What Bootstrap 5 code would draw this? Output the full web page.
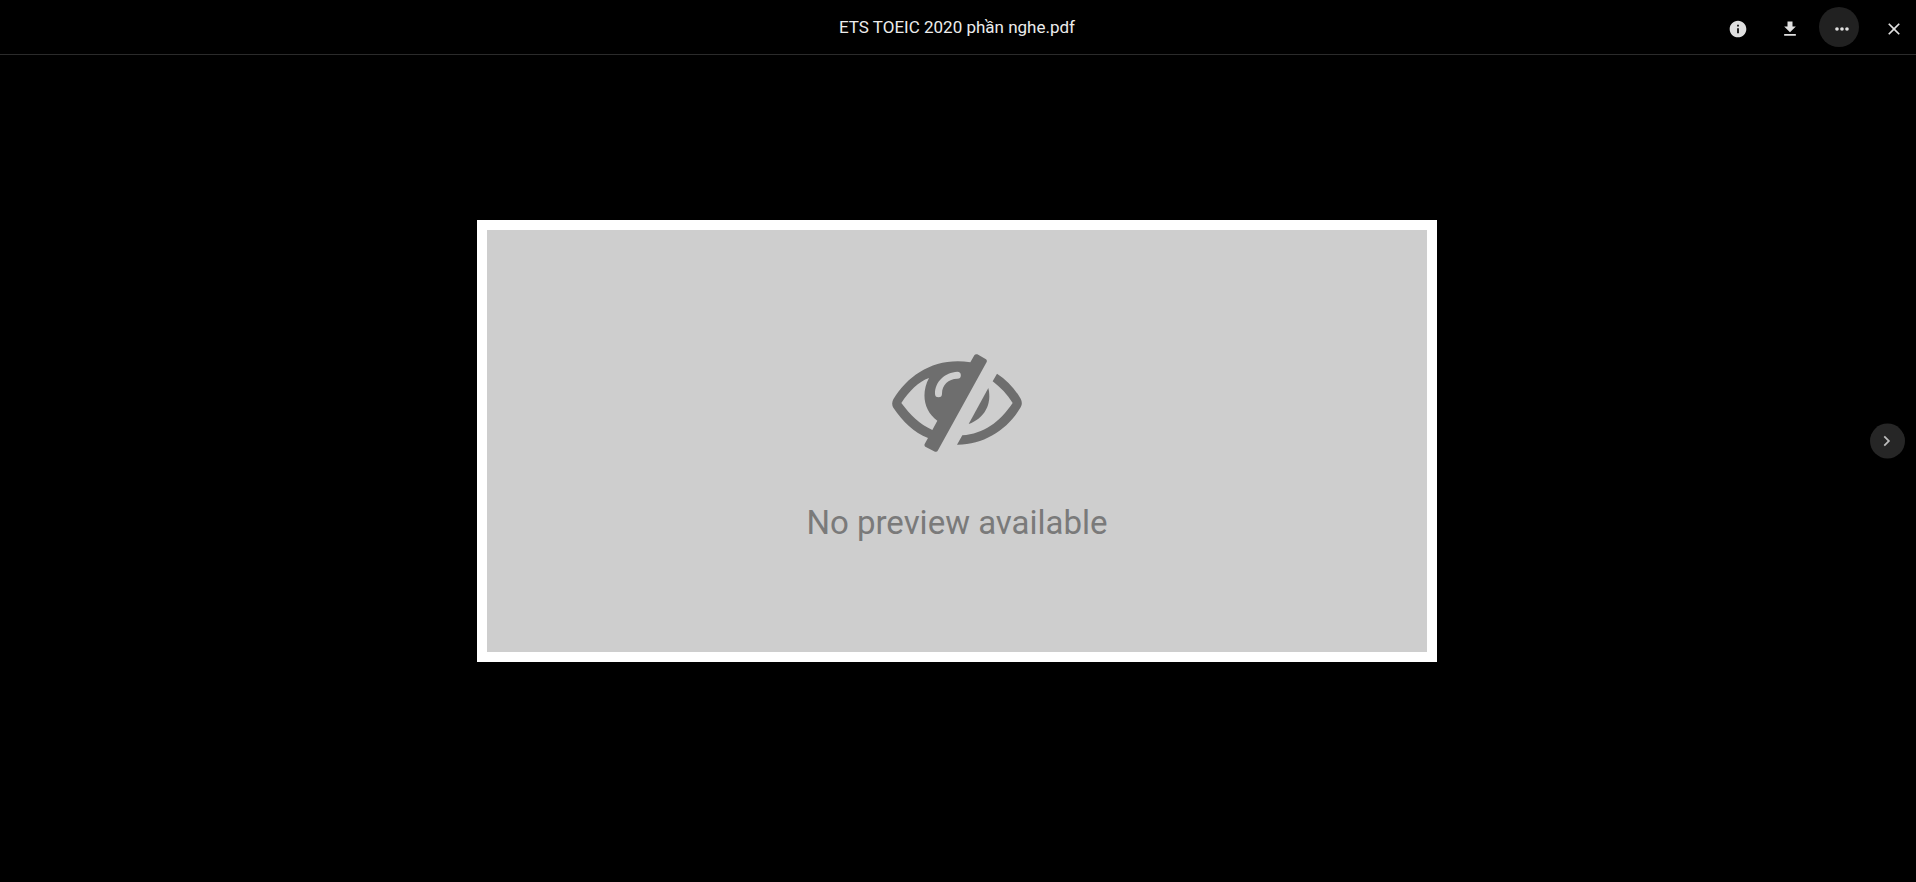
<!DOCTYPE html>
<html lang="en">
<head>
<meta charset="utf-8">
<meta name="viewport" content="width=device-width, initial-scale=1">
<title>ETS TOEIC 2020 phần nghe.pdf</title>
<link href="https://cdn.jsdelivr.net/npm/bootstrap@5.3.0/dist/css/bootstrap.min.css" rel="stylesheet">
<style>
  body { background: #000; font-family: Roboto, "Noto Sans", sans-serif; }
  .viewer { padding-right: 2px; }
  .topbar { height: 55px; border-bottom: 1px solid #2b2b2b; margin-right: -2px; padding-right: 2px; }
  .side { flex: 1 1 0; }
  .file-title { font-size: 17px; line-height: 24px; color: #ececec; }
  .tools { gap: 12px; }
  .tool { width: 40px; height: 40px; color: #e0e0e0; border: 0; border-radius: 50%; }
  .tool svg { position: relative; display: block; }
  .tool-open::before {
    content: ""; position: absolute; inset: -2px 3px 2px -3px;
    border-radius: 50%; background: #212121;
  }
  .stage { padding-bottom: 55px; }
  .preview { width: 960px; max-width: 90%; height: 442px; border: 10px solid #fff; background: #cecece; }
  .preview svg { margin-top: 14px; color: #6e6e6e; }
  .preview-text { font-size: 33px; line-height: 40px; color: #7a7a7a; margin-top: 51px; }
  .next { right: 11px; top: 50%; width: 35px; height: 35px; transform: translateY(-50%); background: #262626; color: #bdbdbd; border: 0; border-radius: 50%; }
</style>
</head>
<body>
<div class="viewer vh-100 d-flex flex-column overflow-hidden position-relative">
  <header class="topbar d-flex align-items-center flex-shrink-0">
    <div class="side"></div>
    <h1 class="file-title fw-normal m-0">ETS TOEIC 2020 phần nghe.pdf</h1>
    <div class="side tools d-flex justify-content-end pt-1">
      <button type="button" class="tool btn p-0 d-flex align-items-center justify-content-center" aria-label="Details">
        <svg width="20" height="20" viewBox="0 0 24 24" fill="currentColor"><path d="M12 2C6.480 2 2 6.480 2 12s4.480 10 10 10 10-4.480 10-10S17.520 2 12 2zm1 15h-2v-6h2v6zm0-8h-2V7h2v2z"/></svg>
      </button>
      <button type="button" class="tool btn p-0 d-flex align-items-center justify-content-center" aria-label="Download">
        <svg width="20" height="20" viewBox="0 0 24 24" fill="currentColor"><path d="M19 9h-4V3H9v6H5l7 7 7-7zM5 18v2h14v-2H5z"/></svg>
      </button>
      <button type="button" class="tool tool-open btn p-0 d-flex align-items-center justify-content-center position-relative" aria-label="More">
        <svg width="20" height="20" viewBox="0 0 24 24" fill="currentColor"><circle cx="6" cy="12" r="2.200"/><circle cx="12" cy="12" r="2.200"/><circle cx="18" cy="12" r="2.200"/></svg>
      </button>
      <button type="button" class="tool btn p-0 d-flex align-items-center justify-content-center" aria-label="Close">
        <svg width="20" height="20" viewBox="0 0 24 24" fill="currentColor"><path d="M19 6.410 17.590 5 12 10.590 6.410 5 5 6.410 10.590 12 5 17.590 6.410 19 12 13.410 17.590 19 19 17.590 13.410 12z"/></svg>
      </button>
    </div>
  </header>
  <main class="stage flex-grow-1 d-flex align-items-center justify-content-center">
    <section class="preview d-flex flex-column align-items-center justify-content-center">
      <svg width="130" height="98" viewBox="36 39 390 294" fill="currentColor" aria-hidden="true">
        <path fill-rule="evenodd" d="M271 64L283 43Q286 38 292 40L318 55Q322 58 320 63L174 328Q171 334 165 332L136 317Q132 314 134 309L144 291C102 274 68 242 40 200Q33 188 40 175C87 99 167 48 271 64ZM147 111C116 122 88 149 64 186C91 222 118 249 157 267L172 239C132 211 122 158 147 111ZM232 92C195 94 165 121 165 158A10.500 10.500 0 0 0 186 158C186 132 205 113 232 113A10.500 10.500 0 0 0 232 92Z"/>
        <path d="M351 98C380 117 404 142 422 173Q429 187 422 199C382 267 311 312 231 311L247 283C311 278 359 244 398 186C382 160 361 139 338 121Z"/>
        <path d="M325 141C337 190 312 233 266 249Z"/>
      </svg>
      <p class="preview-text mb-0">No preview available</p>
    </section>
  </main>
  <button type="button" class="next btn p-0 position-absolute d-flex align-items-center justify-content-center" aria-label="Next">
    <svg width="21" height="21" viewBox="1 0 24 24" fill="currentColor"><path d="M10 6 8.590 7.410 13.170 12l-4.580 4.590L10 18l6-6z"/></svg>
  </button>
</div>
<script src="https://cdn.jsdelivr.net/npm/bootstrap@5.3.0/dist/js/bootstrap.bundle.min.js"></script>
</body>
</html>
